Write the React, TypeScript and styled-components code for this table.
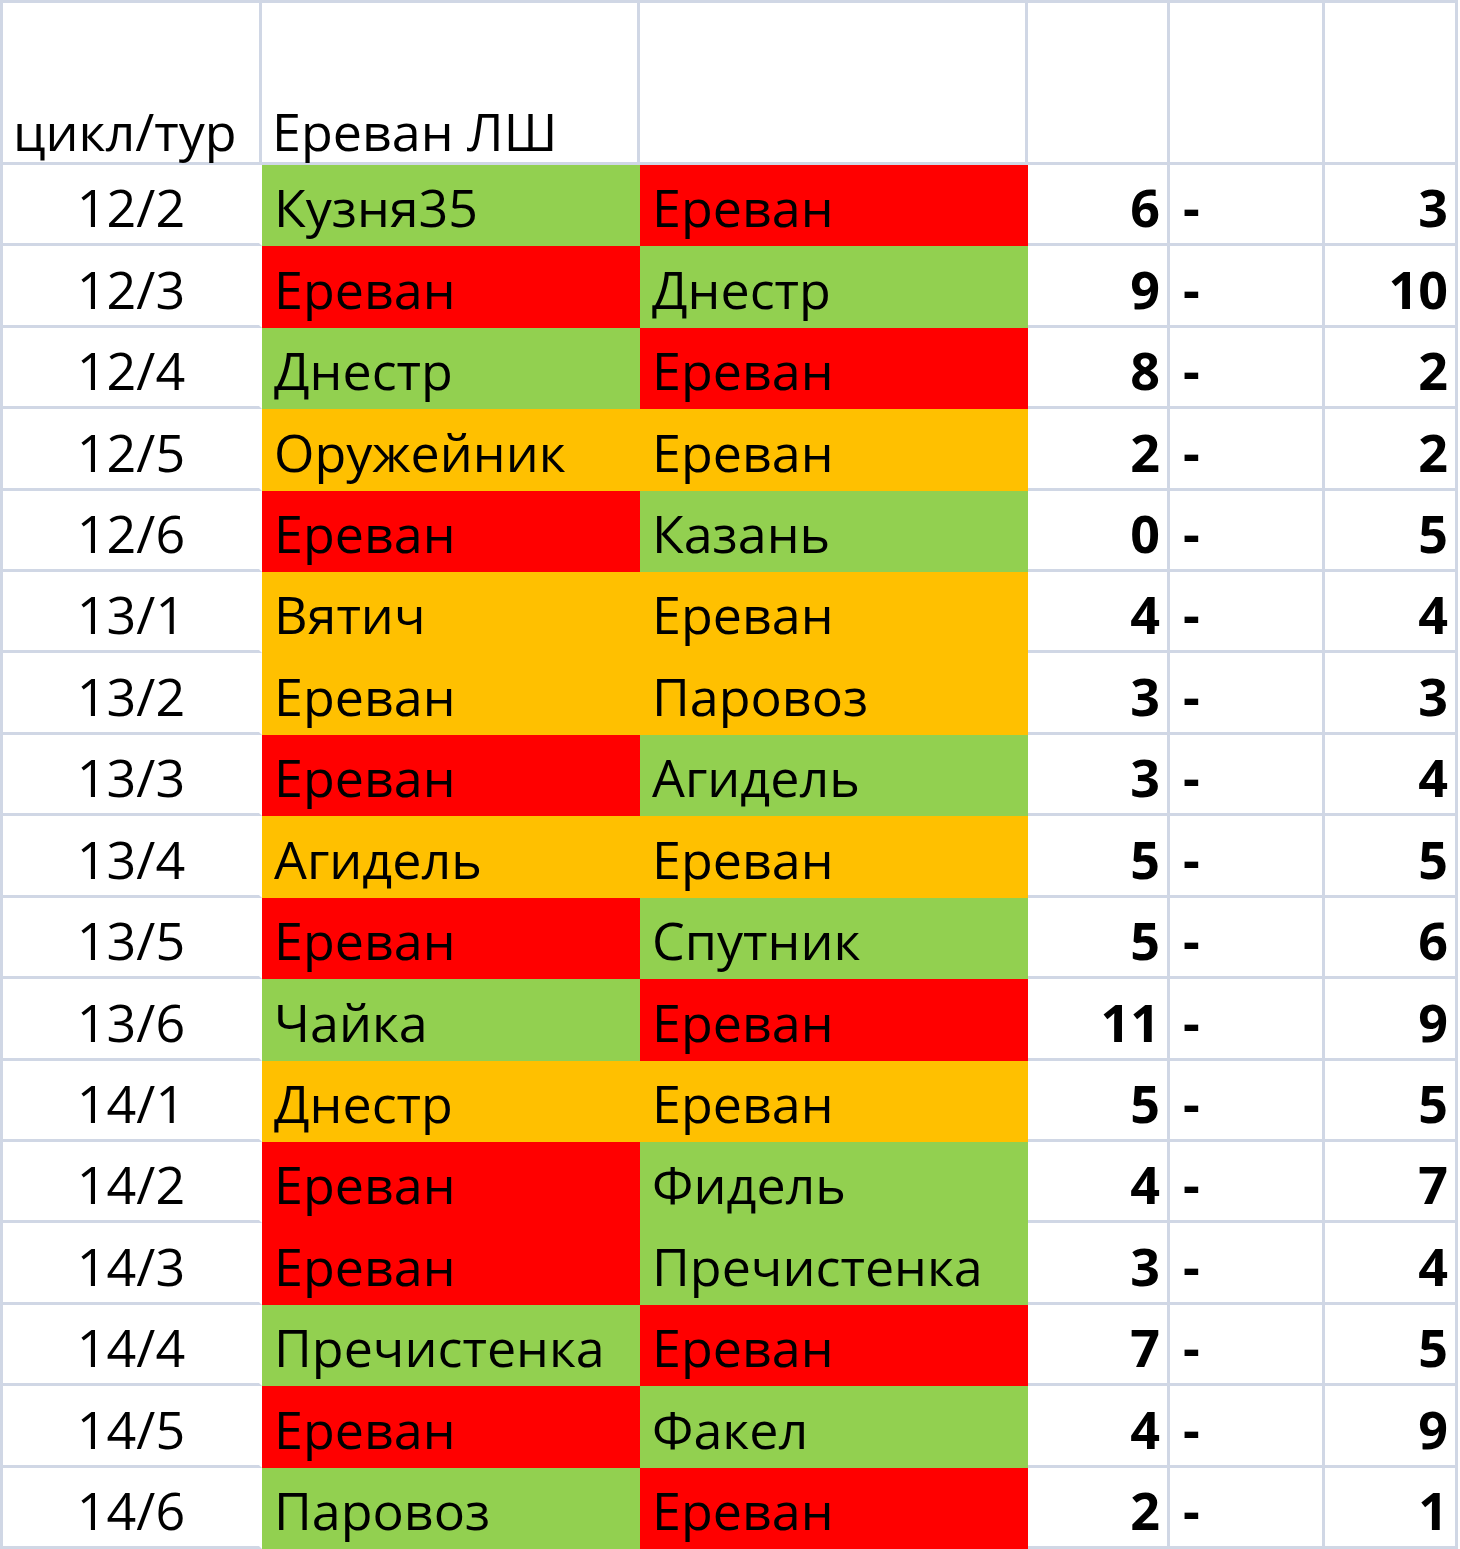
import React from "react";
import styled, { createGlobalStyle } from "styled-components";

const GRID = "#d0d7e5";
const FILLS: Record<string, string> = {
  G: "#92d050",
  R: "#ff0000",
  O: "#ffc000",
};

const Global = createGlobalStyle`
  html, body { margin: 0; padding: 0; background: #fff; }
  body { font-family: "Open Sans", "Noto Sans", sans-serif; }
`;

const Sheet = styled.div`
  display: grid;
  grid-template-columns: 259px 378px 388px 142px 155px 133px;
  grid-template-rows: 162px repeat(17, 1fr);
  height: 1546px;
  width: 1455px;
  border-top: 3px solid ${GRID};
  border-left: 3px solid ${GRID};
  background: #fff;
  color: #000;
  font-size: 52px;
  line-height: 1;
`;

type CellProps = {
  $fill?: string;
  $align?: "left" | "center" | "right";
  $bold?: boolean;
  $header?: boolean;
  $noRight?: boolean;
};

const Cell = styled.div<CellProps>`
  box-sizing: border-box;
  display: flex;
  align-items: flex-end;
  justify-content: ${(p) =>
    p.$align === "center" ? "center" : p.$align === "right" ? "flex-end" : "flex-start"};
  padding: 0 ${(p) => (p.$align === "right" ? "7px" : "0")} ${(p) => (p.$header ? "5px" : "10px")}
    ${(p) => (p.$align === "left" ? (p.$header ? "10px" : "12px") : "0")};
  background: ${(p) => p.$fill ?? "#fff"};
  border-right: 3px solid ${(p) => p.$fill ?? (p.$noRight ? "#fff" : GRID)};
  border-bottom: 3px solid ${(p) => p.$fill ?? GRID};
  font-weight: ${(p) => (p.$bold ? 700 : 400)};
  white-space: nowrap;
  overflow: visible;
`;

const Dash = styled.span`
  font-weight: 700;
  margin-left: 1px;
`;

type Row = [string, string, string, string, string, number, number];

const rows: Row[] = [
  ["12/2", "Кузня35", "G", "Ереван", "R", 6, 3],
  ["12/3", "Ереван", "R", "Днестр", "G", 9, 10],
  ["12/4", "Днестр", "G", "Ереван", "R", 8, 2],
  ["12/5", "Оружейник", "O", "Ереван", "O", 2, 2],
  ["12/6", "Ереван", "R", "Казань", "G", 0, 5],
  ["13/1", "Вятич", "O", "Ереван", "O", 4, 4],
  ["13/2", "Ереван", "O", "Паровоз", "O", 3, 3],
  ["13/3", "Ереван", "R", "Агидель", "G", 3, 4],
  ["13/4", "Агидель", "O", "Ереван", "O", 5, 5],
  ["13/5", "Ереван", "R", "Спутник", "G", 5, 6],
  ["13/6", "Чайка", "G", "Ереван", "R", 11, 9],
  ["14/1", "Днестр", "O", "Ереван", "O", 5, 5],
  ["14/2", "Ереван", "R", "Фидель", "G", 4, 7],
  ["14/3", "Ереван", "R", "Пречистенка", "G", 3, 4],
  ["14/4", "Пречистенка", "G", "Ереван", "R", 7, 5],
  ["14/5", "Ереван", "R", "Факел", "G", 4, 9],
  ["14/6", "Паровоз", "G", "Ереван", "R", 2, 1],
];

export default function App() {
  return (
    <>
      <Global />
      <Sheet>
        <Cell $header $align="left">цикл/тур</Cell>
        <Cell $header $align="left">Ереван ЛШ</Cell>
        <Cell $header />
        <Cell $header />
        <Cell $header />
        <Cell $header />
        {rows.map(([tour, home, hc, away, ac, hs, as]) => (
          <React.Fragment key={tour}>
            <Cell $align="center" $noRight>{tour}</Cell>
            <Cell $align="left" $fill={FILLS[hc]}>{home}</Cell>
            <Cell $align="left" $fill={FILLS[ac]}>{away}</Cell>
            <Cell $align="right" $bold>{hs}</Cell>
            <Cell $align="left"><Dash>-</Dash></Cell>
            <Cell $align="right" $bold>{as}</Cell>
          </React.Fragment>
        ))}
      </Sheet>
    </>
  );
}
